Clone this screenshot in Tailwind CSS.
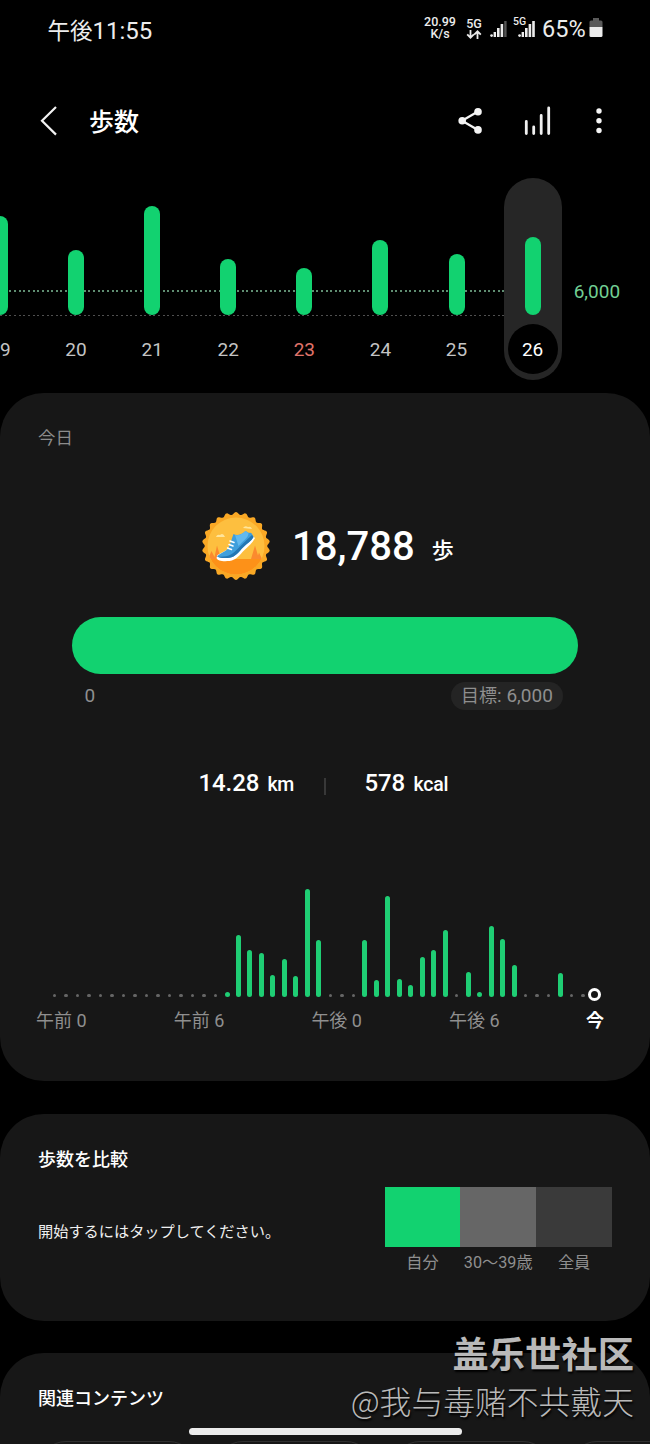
<!DOCTYPE html>
<html lang="ja">
<head>
<meta charset="utf-8">
<title>歩数</title>
<script src="https://cdn.jsdelivr.net/npm/@tailwindcss/browser@4"></script>
</head>
<body class="bg-black">
<main class="relative w-[650px] h-[1444px] overflow-hidden bg-black text-white font-['Roboto','Noto_Sans_CJK_JP',sans-serif]">

  <!-- Status bar -->
  <div class="flex h-[60px] items-start justify-between pl-[47.500px] pr-[47px]">
    <div class="mt-[15px] flex items-center text-[24px] leading-[32px] text-[#ececec]"><span class="text-[22.500px]">午後</span><span>11:55</span></div>
    <div class="flex items-start text-[#ececec]">
      <div class="mt-[16px] w-[34px] text-center text-[12.500px] font-medium leading-[12px]">20.99<br>K/s</div>
      <div class="mt-[16.500px] ml-[8px] w-[18px] text-center text-[12.500px] font-medium leading-[13px]">5G
        <svg class="mx-auto block" width="16" height="9" viewBox="0 0 16 9" fill="none" stroke="#ececec" stroke-width="1.8"><path d="M4.500 0v7.500M1.200 4.400l3.300 3.300 3.300-3.300M11.500 9V1.500M8.200 4.600l3.300-3.300 3.300 3.300"/></svg>
      </div>
      <svg class="mt-[20px] ml-[7px]" width="17" height="18" viewBox="0 0 17 18"><g fill="#ececec"><circle cx="1.600" cy="15.600" r="1.400"/><rect x="3.600" y="12" width="2.400" height="5"/><rect x="7" y="8" width="2.600" height="9"/><rect x="10.600" y="4" width="2.600" height="13"/></g><rect x="14.200" y="1" width="2.400" height="16" fill="#555"/></svg>
      <div class="mt-[17px] ml-[6px] flex h-[22px] w-[22px] flex-col">
        <span class="h-[4px] text-[10.500px] font-medium leading-[10px]">5G</span>
        <svg class="-mt-px ml-[4.500px]" width="17" height="18" viewBox="0 0 17 18" fill="#ececec"><circle cx="1.600" cy="15.600" r="1.400"/><rect x="3.600" y="12" width="2.400" height="5"/><rect x="7" y="8" width="2.600" height="9"/><rect x="10.600" y="4" width="2.600" height="13"/><rect x="14.200" y="1" width="2.600" height="16"/></svg>
      </div>
      <div class="mt-[12.500px] ml-[7px] w-[47px] text-[23.500px] leading-[32px]">65%</div>
      <svg class="mt-[18px]" width="14" height="20" viewBox="0 0 14 20"><path d="M4 0h6v2.500h2a1.500 1.500 0 0 1 1.500 1.500V9H.5V4A1.500 1.500 0 0 1 2 2.500h2z" fill="#5a5a5a"/><path d="M.5 9h13v8.500a1.500 1.500 0 0 1-1.500 1.500H2A1.500 1.500 0 0 1 .5 17.500z" fill="#ececec"/></svg>
    </div>
  </div>

  <!-- App bar -->
  <header class="flex h-[118px] items-start pl-[40px] pr-[47.500px] pt-[45px]">
    <svg width="18" height="32" viewBox="0 0 18 32" fill="none" stroke="#f2f2f2" stroke-width="2.200"><path d="M16 2L2 15.800 16 29.600"/></svg>
    <h1 class="ml-[31px] flex-1 pt-[1.500px] text-[25px] font-medium leading-[32px]">歩数</h1>
    <svg width="24" height="32" viewBox="0 0 24 32" fill="#f4f4f4"><path d="M20 6.500L4 15.700l16 9.200" fill="none" stroke="#f4f4f4" stroke-width="2.300"/><circle cx="20" cy="6.700" r="3.800"/><circle cx="4.200" cy="15.800" r="3.800"/><circle cx="20" cy="24.900" r="3.800"/></svg>
    <svg class="ml-[42px]" width="28" height="32" viewBox="0 0 28 32" fill="none" stroke="#f0f0f0" stroke-width="2.800" stroke-linecap="round"><path d="M2.300 16.500v12M9.700 22v6.500M17.200 10.500v18M24.700 3v25.500"/></svg>
    <svg class="ml-[43px]" width="8" height="32" viewBox="0 0 8 32" fill="#f4f4f4"><circle cx="4" cy="6" r="2.700"/><circle cx="4" cy="15.700" r="2.700"/><circle cx="4" cy="25.500" r="2.700"/></svg>
  </header>

  <!-- Daily history -->
  <section class="relative h-[215px]">
    <div class="absolute left-0 top-[112px] h-[1.500px] w-[504px] bg-[repeating-linear-gradient(90deg,#5f8d71_0_2px,transparent_2px_4.65px)]"></div>
    <div class="absolute left-0 top-[136.500px] h-[1.500px] w-[504px] bg-[repeating-linear-gradient(90deg,#505050_0_2px,transparent_2px_4.65px)]"></div>
    <div class="relative flex">
      <div id="days" class="-ml-[38.100px] flex"></div>
      <div class="ml-[3px] pt-[102px] text-[19px] leading-[24px] text-[#72cf94]">6,000</div>
    </div>
  </section>

  <!-- Today -->
  <section class="h-[688px] rounded-[44px] bg-[#171717]">
    <h2 class="pl-[38px] pt-[33px] text-[17.500px] leading-[24px] text-[#8c8c8c]">今日</h2>
    <div class="mt-[62px] flex h-[68px] pl-[202px]">
      <svg width="68" height="68" viewBox="0 0 68 68">
        <path id="seal" fill="#f9a825"/>
        <clipPath id="disc"><circle cx="34" cy="34" r="28.500"/></clipPath>
        <g clip-path="url(#disc)">
          <rect width="68" height="68" fill="#fdbf3f"/>
          <path d="M14 25q1-3 4-2 3-3 5 2zM41 16q2-3 5-1 3-1 4 2z" fill="#ffe59a"/>
          <path d="M6 47l3.500-8 3 6 2.500-11.500L19 47zM49 47l4-13.500 3 10 1-3 3 6.500z" fill="#fb8a2e"/>
          <rect y="47" width="68" height="21" fill="#fd9118"/>
        </g>
        <path d="M14.500 46c1 3 6 3.500 13 3 7-1 10-6 15-11 4-4 8-7 10.500-12l-2.500-2-35 19z" fill="#fff"/>
        <path d="M15 44.500c2-3 9-5 11.500-8.500 2-4 3-9 5-14 3 2 8 1 12-3l3.500 2c2-1 3 0 4.500 4-2 4-6 6-10 10-5 5-8 10-14 10.800-5 .7-9 .2-12.500-1.300z" fill="#3f9fdc"/>
        <path d="M33 23c4 1 7-1 10.500-4l3 2c0 5-6 8-10 13z" fill="#62b9ee"/>
        <path d="M15 44.500c10 1 15-2 19-6 6-6 9-9 16-15.500l1.500 2c-2 4-6 6-10 10-5 5-8 10-14 10.800-5 .7-9 .2-12.500-1.300z" fill="#2477b4"/>
        <path d="M28 29l4 1.500M27 32.500l4 1.500M25.500 36l4 1.500" stroke="#fff" stroke-width="1.500" stroke-linecap="round"/>
      </svg>
      <div class="ml-[22px] pt-[11px] text-[40px] font-medium leading-[48px]">18,788</div>
      <div class="ml-[17px] pt-[23px] text-[22px] font-medium leading-[32px]">歩</div>
    </div>
    <div class="ml-[72px] mt-[37px] h-[57px] w-[506px] rounded-full bg-[#12d270]"></div>
    <div class="mt-[8px] flex items-center justify-between pl-[84.500px] pr-[87px] text-[19px] leading-[28px] text-[#8f8f8f]">
      <span>0</span>
      <span class="flex h-[28px] w-[112px] items-center justify-center rounded-full bg-[#242424]"><span class="text-[18px]">目標</span><span class="whitespace-pre">: 6,000</span></span>
    </div>
    <div class="mt-[57px] flex h-[32px] items-baseline pl-[198.500px] text-[24px] font-medium leading-[32px]">
      <span class="w-[69px] tracking-[-0.100px]">14.28</span><span class="w-[56.500px] text-[19.500px] tracking-[-0.300px]">km</span>
      <span class="h-[17px] w-[2px] translate-y-[4px] bg-[#383838]"></span>
      <span class="ml-[38.500px] w-[49px] tracking-[-0.200px]">578</span><span class="text-[19.500px] tracking-[-0.200px]">kcal</span>
    </div>
    <div id="hours" class="ml-[49px] mt-[78px] flex h-[120px] items-end"></div>
    <div class="mt-[9.500px] grid grid-cols-[137.700px_137.700px_137.700px_137px_40px] pl-[36px] text-[18px] leading-[28px] text-[#8f8f8f]">
      <span>午前 0</span><span>午前 6</span><span>午後 0</span><span>午後 6</span><span class="font-bold text-white">今</span>
    </div>
  </section>

  <!-- Compare -->
  <section class="mt-[33px] h-[207px] rounded-[44px] bg-[#171717] pl-[38px] pr-[38px] pt-[33px]">
    <h2 class="text-[18px] font-medium leading-[26px]">歩数を比較</h2>
    <div class="flex justify-between pt-[13.500px]">
      <p class="pt-[33px] text-[15.200px] leading-[24px] text-[#f0f0f0]">開始するにはタップしてください。</p>
      <div class="grid w-[227.500px] grid-cols-3 text-center text-[16.200px] leading-[32px] text-[#8f8f8f]">
        <div><div class="h-[60.500px] bg-[#12d270]"></div>自分</div>
        <div><div class="h-[60.500px] bg-[#666]"></div><span class="whitespace-nowrap">30〜39歳</span></div>
        <div><div class="h-[60.500px] bg-[#3a3a3a]"></div>全員</div>
      </div>
    </div>
  </section>

  <!-- Related content -->
  <section class="mt-[32px] h-[200px] rounded-[44px] bg-[#171717] pt-[33px]">
    <h2 class="pl-[38px] text-[18px] font-medium leading-[26px]">関連コンテンツ</h2>
    <div class="ml-[38px] mt-[29px] flex gap-[18px]">
      <div class="h-[100px] w-[159px] shrink-0 rounded-[28px] border border-[#303030]"></div>
      <div class="h-[100px] w-[159px] shrink-0 rounded-[28px] border border-[#303030]"></div>
      <div class="h-[100px] w-[159px] shrink-0 rounded-[28px] border border-[#303030]"></div>
      <div class="h-[100px] w-[159px] shrink-0 rounded-[28px] border border-[#303030]"></div>
    </div>
  </section>

  <!-- Gesture handle and watermark float above the page -->
  <div class="absolute left-[188.500px] top-[1428px] h-[7px] w-[273px] rounded-full bg-[#ececec]"></div>
  <div lang="zh-CN" class="absolute right-[16px] top-[1328px] whitespace-nowrap text-right font-['Noto_Sans_CJK_SC',sans-serif] text-[#b9b9b9] [text-shadow:1px_2px_2px_#000]">
    <div class="text-[36.300px] font-bold leading-[48px]">盖乐世社区</div>
    <div class="text-[31.800px] font-light leading-[48px]">@我与毒赌不共戴天</div>
  </div>
</main>

<script>
  // Daily bars: [label, height]
  const days = [['19', 99], ['20', 65], ['21', 109], ['22', 56], ['23', 47], ['24', 75], ['25', 61], ['26', 78]];
  document.getElementById('days').innerHTML = days.map(([d, h]) => {
    const sel = d === '26';
    const tone = sel ? 'text-white' : d === '23' ? 'text-[#e0736a]' : 'text-[#c4c4c4]';
    return `<div class="flex w-[76.100px] justify-center"><div class="flex h-[201.500px] w-[58px] flex-col items-center rounded-full ${sel ? 'bg-[#262626]' : ''}">
      <div class="flex h-[137px] items-end"><div class="w-[16px] rounded-full bg-[#12d270]" style="height:${h}px"></div></div>
      <div class="mt-[9px] flex size-[50px] items-center justify-center rounded-full pt-[2px] text-[19px] ${sel ? 'bg-black' : ''} ${tone}">${d}</div></div></div>`;
  }).join('');

  // Half-hour bars; 0 marks an idle slot, -1 the current time
  const slots = [...Array(15).fill(0), 5, 62, 47, 44, 22, 38, 21, 108, 57, 0, 0, 0, 57, 17, 101, 18, 12, 40.500, 47, 67, 0, 25, 5, 71, 58, 32.500, 0, 0, 0, 24.500, 0, 0, -1];
  document.getElementById('hours').innerHTML = slots.map(v => {
    const mark = v > 0 ? `<div class="w-[5px] rounded-full bg-[#1fce74]" style="height:${v}px"></div>`
      : v === 0 ? '<div class="size-[3.500px] rounded-full bg-[#666]"></div>'
      : '<div class="-mb-[4px] size-[13px] shrink-0 rounded-full border-[3.500px] border-white"></div>';
    return `<div class="flex w-[11.490px] shrink-0 items-end justify-center">${mark}</div>`;
  }).join('');

  // Scalloped edge of the badge
  let p = '';
  const n = 22;
  for (let i = 0; i <= n * 12; i++) {
    const a = i / (n * 12) * Math.PI * 2, r = 32.600 + 1.400 * Math.cos(a * n);
    p += (i ? 'L' : 'M') + (34 + r * Math.sin(a)).toFixed(2) + ' ' + (34 - r * Math.cos(a)).toFixed(2);
  }
  document.getElementById('seal').setAttribute('d', p + 'Z');
</script>
</body>
</html>
